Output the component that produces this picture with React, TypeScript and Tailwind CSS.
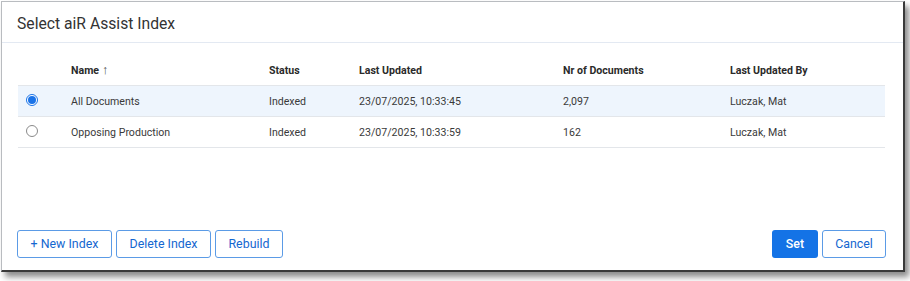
import { useState } from "react";

const ROWS = [
  { id: 1, name: "All Documents", status: "Indexed", updated: "23/07/2025, 10:33:45", docs: "2,097", by: "Luczak, Mat" },
  { id: 2, name: "Opposing Production", status: "Indexed", updated: "23/07/2025, 10:33:59", docs: "162", by: "Luczak, Mat" },
];

const COLS = "grid grid-cols-[53px_198px_90px_204px_167px_1fr] items-center";

export default function App() {
  const [selected, setSelected] = useState(1);

  return (
    <div className="w-[910px] h-[281px] bg-white font-['Roboto',sans-serif] text-[#3a3a3a] pt-[1px] pl-[1px]">
      {/* Dialog */}
      <div className="w-[904px] h-[271px] bg-white border-l border-t border-[#b9bcc0] border-r-2 border-b-2 border-r-[#3a3a3a] border-b-[#3a3a3a] shadow-[4px_5px_6px_rgba(0,0,0,0.45)] flex flex-col">
        {/* Header */}
        <div className="h-[41px] border-b border-[#e3e9f2] pl-[15px] pt-[4px] flex items-center">
          <h2 className="text-[15.7px] text-[#333]">Select aiR Assist Index</h2>
        </div>

        {/* Table */}
        <div className="ml-[16px] mr-[18px] mt-[13px] text-[10.6px]">
          <div className={`${COLS} h-[30px] border-b border-[#e3e6ea] font-bold text-[#2a2a2a]`}>
            <div />
            <div className="flex items-center gap-[3px]">
              Name
              <span className="text-[12.5px] font-normal text-[#555] leading-none">↑</span>
            </div>
            <div>Status</div>
            <div>Last Updated</div>
            <div>Nr of Documents</div>
            <div>Last Updated By</div>
          </div>
          {ROWS.map((row) => {
            const isSel = row.id === selected;
            return (
              <div
                key={row.id}
                onClick={() => setSelected(row.id)}
                className={`${COLS} h-[31px] pt-[2px] border-b border-[#e3e6ea] ${isSel ? "bg-[#eef5fd]" : "bg-white"}`}
              >
                <div className="pl-[8px] pb-[4px] flex items-center">
                  {isSel ? (
                    <span className="w-[12px] h-[12px] rounded-full border border-[#1a73e8] flex items-center justify-center bg-white">
                      <span className="w-[8px] h-[8px] rounded-full bg-[#1a73e8]" />
                    </span>
                  ) : (
                    <span className="w-[12px] h-[12px] rounded-full border border-[#8a8a8a] bg-white" />
                  )}
                </div>
                <div>{row.name}</div>
                <div>{row.status}</div>
                <div>{row.updated}</div>
                <div>{row.docs}</div>
                <div>{row.by}</div>
              </div>
            );
          })}
        </div>

        {/* Footer buttons */}
        <div className="mt-auto mb-[12px] pl-[15px] pr-[17px] flex items-center justify-between text-[12.4px]">
          <div className="flex gap-[4px]">
            <button className="h-[28px] w-[95px] rounded-[3px] border border-[#5b9be6] text-[#1467d0] bg-white">+ New Index</button>
            <button className="h-[28px] w-[95px] rounded-[3px] border border-[#5b9be6] text-[#1467d0] bg-white">Delete Index</button>
            <button className="h-[28px] w-[68px] rounded-[3px] border border-[#5b9be6] text-[#1467d0] bg-white">Rebuild</button>
          </div>
          <div className="flex gap-[4px]">
            <button className="h-[28px] w-[46px] rounded-[3px] bg-[#1473e6] text-white font-medium">Set</button>
            <button className="h-[28px] w-[64px] rounded-[3px] border border-[#5b9be6] text-[#1467d0] bg-white">Cancel</button>
          </div>
        </div>
      </div>
    </div>
  );
}
